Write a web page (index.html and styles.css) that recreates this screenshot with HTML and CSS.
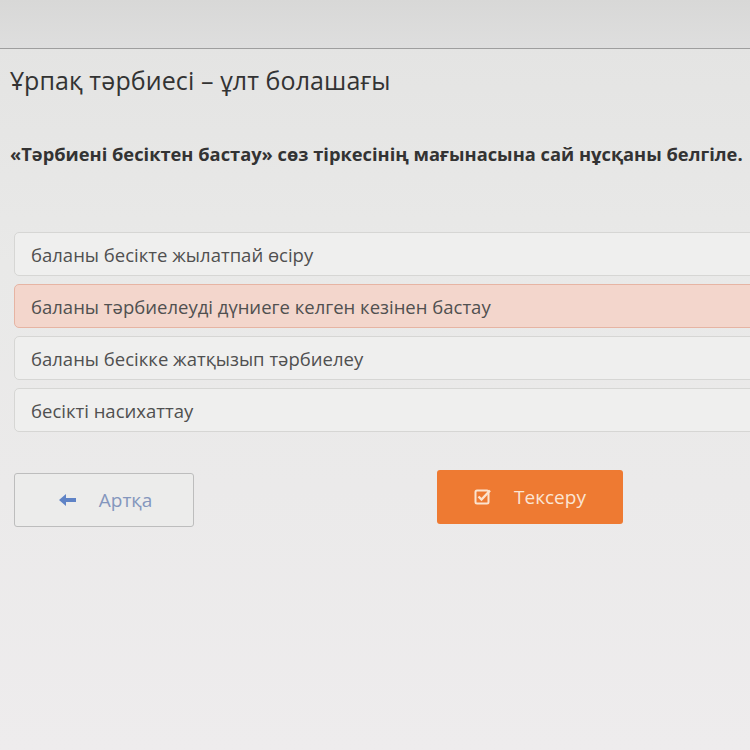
FILE: index.html
```html
<!DOCTYPE html>
<html lang="kk">
<head>
<meta charset="utf-8">
<link rel="stylesheet" href="styles.css">
</head>
<body>
<div class="topbar"></div>
<main class="content">
  <h1 class="title">Ұрпақ тәрбиесі – ұлт болашағы</h1>
  <p class="question">«Тәрбиені бесіктен бастау» сөз тіркесінің мағынасына сай нұсқаны белгіле.</p>
  <div class="options">
    <div class="option">баланы бесікте жылатпай өсіру</div>
    <div class="option selected">баланы тәрбиелеуді дүниеге келген кезінен бастау</div>
    <div class="option">баланы бесікке жатқызып тәрбиелеу</div>
    <div class="option">бесікті насихаттау</div>
  </div>
  <div class="actions">
    <button class="btn back">
      <svg class="ico" viewBox="0 0 20 16" width="20" height="16"><path d="M1 8 L8 2 L8 6 L18 6 L18 10 L8 10 L8 14 Z" fill="#5f83c6"/></svg>
      <span>Артқа</span>
    </button>
    <button class="btn check">
      <svg class="ico" viewBox="0 0 18 18" width="18" height="18"><rect x="1.5" y="2.5" width="13" height="13" rx="1.5" fill="none" stroke="#fbe3cf" stroke-width="2"/><path d="M4.5 8.5 L7.5 11.5 L16 2.5" fill="none" stroke="#fbe3cf" stroke-width="2.4"/></svg>
      <span>Тексеру</span>
    </button>
  </div>
</main>
</body>
</html>
```
FILE: styles.css
```css
html, body { margin: 0; padding: 0; }
body {
  width: 750px;
  height: 750px;
  overflow: hidden;
  font-family: "Open Sans", "DejaVu Sans", sans-serif;
  font-stretch: 90%;
  background: linear-gradient(180deg, #e3e3e2 0%, #e9e9e8 35%, #ebeaea 65%, #eeeced 100%);
  color: #3a3a3a;
}
.topbar {
  height: 48px;
  border-bottom: 1px solid #9e9e9e;
  background: linear-gradient(180deg, #d8d8d7 0%, #dedede 100%);
}
.content {
  padding: 0 0 0 10px;
}
.title {
  margin: 14px 0 0 0;
  font-size: 25px;
  font-weight: 400;
  color: #333;
  line-height: 34px;
  letter-spacing: 0.1px;
}
.question {
  margin: 44px 0 0 0;
  font-size: 18.3px;
  font-weight: 700;
  color: #333;
  white-space: nowrap;
  line-height: 26px;
}
.options {
  margin: 65px 0 0 4px;
  display: flex;
  flex-direction: column;
  gap: 8px;
  width: 760px;
}
.option {
  height: 42px;
  border: 1px solid #d6d6d4;
  border-radius: 5px;
  background: #efefee;
  box-sizing: content-box;
  padding-left: 16px;
  display: flex;
  align-items: center;
  font-size: 18.5px;
  color: #505050;
}
.option.selected {
  background: #f3d6cc;
  border-color: #e6b4a3;
}
.actions {
  margin: 38px 0 0 4px;
  display: flex;
  align-items: flex-start;
  gap: 243px;
}
.btn {
  font-family: inherit;
  font-stretch: 90%;
  font-size: 19px;
  display: flex;
  align-items: center;
  justify-content: center;
  border-radius: 3px;
  cursor: pointer;
}
.btn.back {
  margin-top: 3px;
  width: 180px;
  height: 54px;
  background: #ececeb;
  border: 1px solid #bdbdbd;
  color: #8496bd;
  padding-right: 4px;
  gap: 21px;
}
.btn.check {
  width: 186px;
  height: 54px;
  background: #ee7a32;
  border: none;
  color: #fbe5d4;
  gap: 22px;
  padding-left: 6px;
}
.ico { display: block; }
```
